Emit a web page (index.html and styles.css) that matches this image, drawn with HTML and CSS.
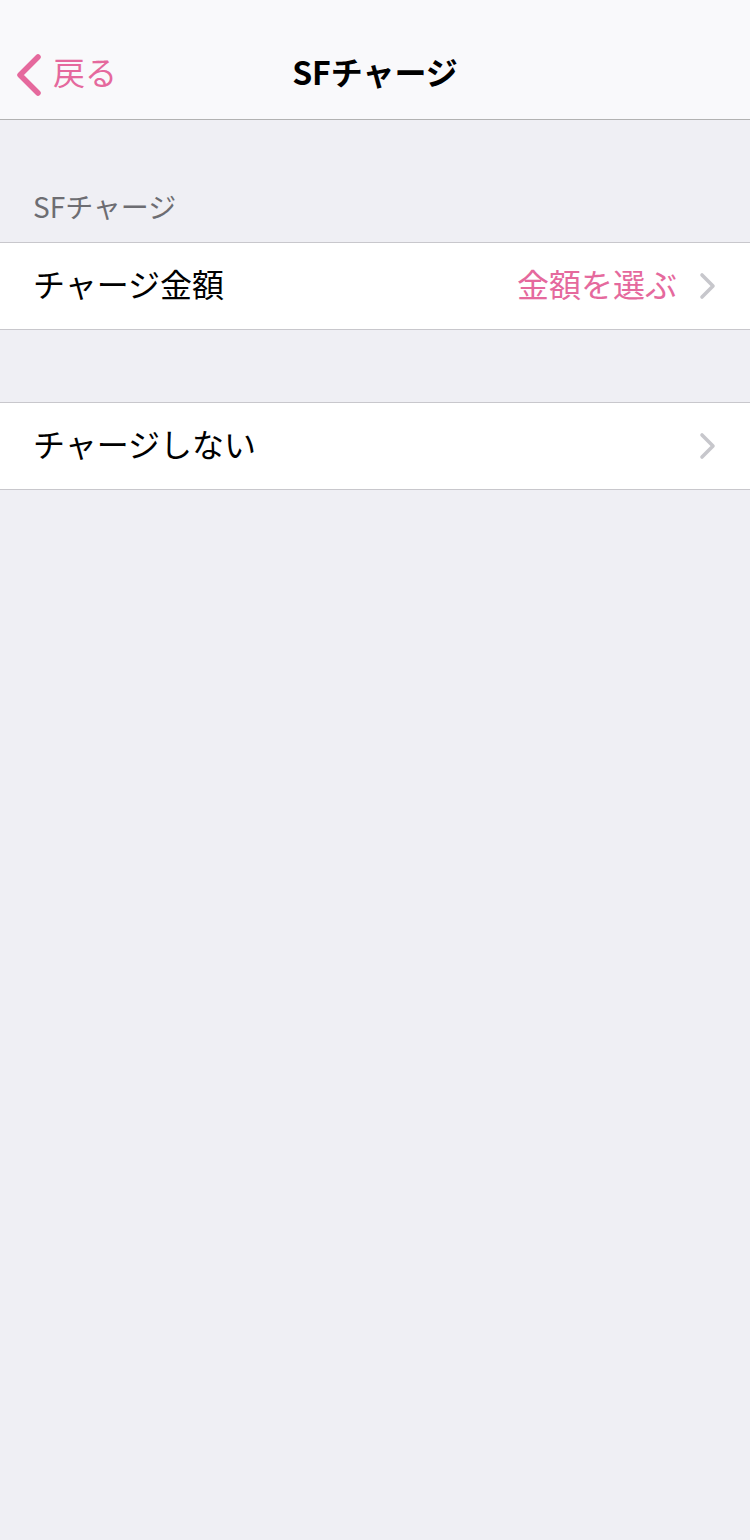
FILE: index.html
```html
<!DOCTYPE html>
<html>
<head>
    <meta charset="UTF-8">
    <meta name="viewport" content="width=device-width, initial-scale=1.0">
    <title>SFチャージ</title>

    <link rel="stylesheet" href="styles.css">
</head>

<body>
    <div class="navbar">
        <div class="back">
            <svg class="back-icon" width="28" height="46" viewBox="0 0 28 46">
                <polyline points="23,5 5,23 23,41" fill="none" stroke="#e5699d" stroke-width="5.5" stroke-linecap="round" stroke-linejoin="round"/>
            </svg>
            <span class="back-text">戻る</span>
        </div>
        <div class="title">SFチャージ</div>
    </div>

    <div class="section-header">SFチャージ</div>

    <div class="group">
        <div class="row">
            <span class="label">チャージ金額</span>
            <span class="value">金額を選ぶ</span>
            <svg class="chevron" width="18" height="28" viewBox="0 0 18 28">
                <polyline points="3,3 14,14 3,25" fill="none" stroke="#c7c7cc" stroke-width="3.6" stroke-linecap="round" stroke-linejoin="round"/>
            </svg>
        </div>
    </div>

    <div class="group">
        <div class="row">
            <span class="label">チャージしない</span>
            <svg class="chevron" width="18" height="28" viewBox="0 0 18 28">
                <polyline points="3,3 14,14 3,25" fill="none" stroke="#c7c7cc" stroke-width="3.6" stroke-linecap="round" stroke-linejoin="round"/>
            </svg>
        </div>
    </div>
</body>
</html>
```

FILE: styles.css
```css
body {
    margin: 0;
    background-color: #efeff4;
    font-family: "Noto Sans CJK JP", "Noto Sans", sans-serif;
    min-height: 1540px;
}

.navbar {
    position: relative;
    height: 91px;
    padding-top: 28px;
    background-color: #f9f9fb;
    border-bottom: 1px solid #b2b2b2;
    display: flex;
    align-items: center;
    justify-content: center;
}

.back {
    position: absolute;
    left: 15px;
    top: 48px;
    display: flex;
    align-items: center;
    gap: 10px;
    color: #e5699d;
    font-size: 32px;
}

.back-icon {
    display: block;
    margin-top: 4px;
}

.back-text {
    margin-bottom: 4px;
}

.title {
    font-size: 32px;
    font-weight: bold;
    color: #000;
    margin-top: -6px;
}

.section-header {
    height: 122px;
    box-sizing: border-box;
    display: flex;
    align-items: flex-end;
    padding: 0 33px 16px;
    font-size: 28px;
    color: #6d6d72;
}

.group {
    background-color: #fff;
    border-top: 1px solid #c8c7cc;
    border-bottom: 1px solid #c8c7cc;
    margin-bottom: 72px;
}

.row {
    height: 86px;
    display: flex;
    align-items: center;
    padding: 0 33px;
    font-size: 32px;
}

.label,
.value {
    margin-bottom: 6px;
}

.label {
    color: #000;
    flex: 1;
}

.value {
    color: #e5699d;
    margin-right: 22px;
}

.chevron {
    display: block;
}
```
